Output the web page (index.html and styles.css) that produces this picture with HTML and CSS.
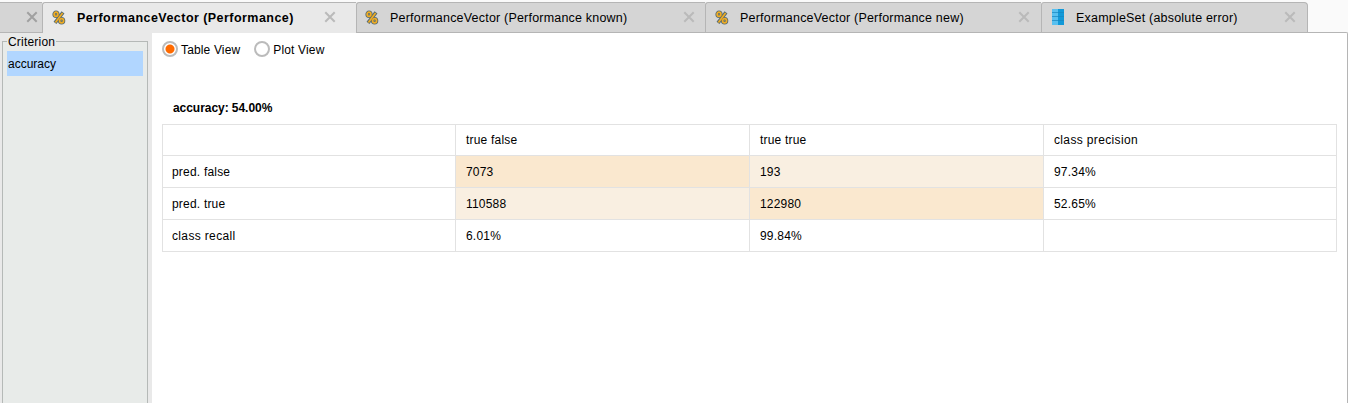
FILE: index.html
```
<!DOCTYPE html>
<html lang="en">
<head>
<meta charset="utf-8">
<title>Performance results</title>
<link rel="stylesheet" href="styles.css">
</head>
<body>
<svg class="defs" width="0" height="0">
  <symbol id="percent" viewBox="0 0 14 16">
    <g fill="none" stroke="#566b73" stroke-width="3.6"><ellipse cx="4" cy="4.3" rx="1.8" ry="2"/><ellipse cx="9.6" cy="10.7" rx="1.9" ry="2"/><path d="M11 2.3 3 12.9"/></g>
    <g fill="none" stroke="#f0ac22" stroke-width="1.7"><ellipse cx="4" cy="4.3" rx="1.9" ry="2.1"/><ellipse cx="9.6" cy="10.7" rx="2" ry="2.1"/><path d="M10.6 2.9 3.4 12.4"/></g>
    <g fill="#8a8660"><circle cx="4" cy="4.3" r=".8"/><circle cx="9.6" cy="10.7" r=".8"/></g>
  </symbol>
  <symbol id="close" viewBox="0 0 12 12"><path d="M1.3 1.3 10.7 10.7M10.7 1.3 1.3 10.7" fill="none" stroke="currentColor" stroke-width="2"/></symbol>
</svg>
<nav class="tabs">
  <div class="tab tab-cut"><svg class="close dark"><use href="#close"/></svg></div>
  <div class="tab tab-a active"><svg class="icon"><use href="#percent"/></svg><span class="title">PerformanceVector (Performance)</span><svg class="close"><use href="#close"/></svg></div>
  <div class="tab tab-b"><svg class="icon"><use href="#percent"/></svg><span class="title">PerformanceVector (Performance known)</span><svg class="close"><use href="#close"/></svg></div>
  <div class="tab tab-c"><svg class="icon"><use href="#percent"/></svg><span class="title">PerformanceVector (Performance new)</span><svg class="close"><use href="#close"/></svg></div>
  <div class="tab tab-d"><svg class="icon data" viewBox="0 0 12 16"><path fill="#58c0f0" d="M0 0h6v16H0z"/><path fill="#1299d8" d="M6 0h6v16H6z"/><path d="M0 3.5h12M0 7.5h12M0 11.5h12" stroke="#1687c0" stroke-width="1" opacity=".7"/></svg><span class="title">ExampleSet (absolute error)</span><svg class="close"><use href="#close"/></svg></div>
</nav>
<main class="panel">
  <aside class="side">
    <fieldset class="criterion"><legend>Criterion</legend><div class="choice">accuracy</div></fieldset>
  </aside>
  <section class="content">
    <div class="views">
      <label class="view"><span class="radio on"></span><span>Table View</span></label>
      <label class="view"><span class="radio"></span><span>Plot View</span></label>
    </div>
    <h1 class="score">accuracy: 54.00%</h1>
    <table class="matrix">
      <colgroup><col class="narrow"><col class="wide"><col class="wide"><col class="narrow"></colgroup>
      <tr><td></td><td>true false</td><td>true true</td><td class="loose">class precision</td></tr>
      <tr><td>pred. false</td><td class="hit">7073</td><td class="miss">193</td><td>97.34%</td></tr>
      <tr><td>pred. true</td><td class="miss">110588</td><td class="hit">122980</td><td>52.65%</td></tr>
      <tr><td class="loose">class recall</td><td>6.01%</td><td>99.84%</td><td></td></tr>
    </table>
  </section>
</main>
</body>
</html>
```
FILE: styles.css
```
* { box-sizing: border-box; }
body { margin: 0; height: 403px; overflow: hidden; background: #fafafa; color: #000; font: 12px/16px "Liberation Sans", Arial, sans-serif; display: flex; flex-direction: column; }
.defs { display: none; }
.tabs { display: flex; flex: none; height: 32px; padding-top: 2px; }
.tab { display: flex; align-items: center; height: 30px; background: #d5d5d5; border-top: 1px solid #b5b5b5; border-left: 1px solid #b5b5b5; border-radius: 3px 0 0 0; padding: 0 10px 0 7px; }
.tab-cut { width: 42px; border-left: 0; padding-right: 4px; border-radius: 0; }
.tab-a { width: 314px; padding: 0 20px 0 8px; }
.tab-b { width: 349px; }
.tab-c { width: 336px; padding: 0 11px 0 8px; }
.tab-d { width: 267px; padding: 0 11px 0 8px; border-right: 1px solid #b5b5b5; border-radius: 3px 4px 0 0; }
.active { height: 31px; margin-bottom: -1px; background: #e9e9e9; font-weight: bold; position: relative; }
.title { white-space: nowrap; font-size: 12.5px; letter-spacing: .2px; }
.active .title { letter-spacing: .45px; }
.icon { width: 14px; height: 16px; flex: none; margin: 0 11px 0 1px; }
.data { width: 12px; margin: 0 12px 2px 2px; }
.close { width: 12px; height: 12px; margin: 0 0 2px auto; color: #bababa; flex: none; }
.dark { color: #a0a0a0; }
.panel { flex: 1; min-height: 0; display: flex; background: #fff; border: solid #b5b5b5; border-width: 1px 1px 0 0; border-radius: 0 2px 0 0; }
.side { display: flex; width: 152px; background: #e9e9e9; padding: 1px 4px 0 2px; }
.criterion { flex: 1; margin: 0; border: 1px solid #b5b9b7; border-bottom: 0; padding: 3px 4px 0; background: #e8ebe9; min-width: 0; }
.criterion legend { padding: 1px 1px 0 1px; margin-left: 0; line-height: 14px; height: 14px; background: #e9eae9; letter-spacing: .2px; }
.choice { height: 25px; line-height: 26px; background: #b1d6ff; padding-left: 1px; }
.content { flex: 1; padding: 8px 10px 0; }
.views { display: flex; gap: 14px; height: 17px; }
.view { display: flex; align-items: flex-start; gap: 3px; line-height: 18px; letter-spacing: .15px; }
.radio { width: 16px; height: 16px; border: 2px solid #bbb; border-radius: 50%; background: #fff; }
.on { background: radial-gradient(circle, #ff6a00 4px, #fff 5px); }
.score { font-size: 12px; line-height: 16px; margin: 42px 0 8px 11px; letter-spacing: -.05px; }
.matrix { width: 1175px; border-collapse: collapse; table-layout: fixed; letter-spacing: .2px; }
.matrix .narrow { width: 293px; }
.matrix .wide { width: 294px; }
.matrix td { height: 32px; padding: 0 0 0 10px; border: 1px solid #e2e2e2; }
.matrix td:first-child { padding-left: 9px; }
.matrix tr:first-child td { height: 31px; }
.matrix .loose { letter-spacing: .35px; }
.matrix .hit { background: #fae8cf; }
.matrix .miss { background: #f9efe1; }
```
